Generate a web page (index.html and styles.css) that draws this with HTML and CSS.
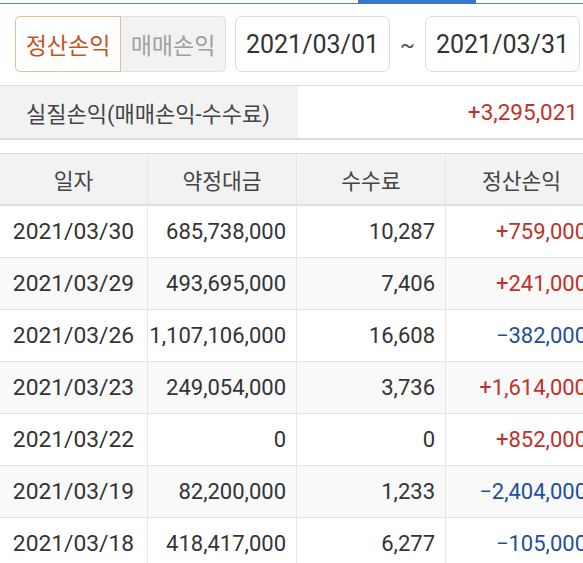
FILE: index.html
```html
<!DOCTYPE html>
<html lang="ko">
<head>
<meta charset="utf-8">
<link rel="stylesheet" href="styles.css">
</head>
<body>
<div class="topbar"><div class="tab-indicator"></div></div>
<div class="controls">
  <div class="toggle">
    <div class="toggle-btn active">정산손익</div>
    <div class="toggle-btn">매매손익</div>
  </div>
  <div class="date-box">2021/03/01</div>
  <div class="tilde">~</div>
  <div class="date-box">2021/03/31</div>
</div>
<div class="summary">
  <div class="summary-label">실질손익(매매손익-수수료)</div>
  <div class="summary-value plus">+3,295,021</div>
</div>
<div class="table">
  <div class="row head">
    <div class="cell c">일자</div>
    <div class="cell c">약정대금</div>
    <div class="cell c">수수료</div>
    <div class="cell c">정산손익</div>
  </div>
  <div class="row">
    <div class="cell date">2021/03/30</div>
    <div class="cell r">685,738,000</div>
    <div class="cell r">10,287</div>
    <div class="cell r plus">+759,000</div>
  </div>
  <div class="row alt">
    <div class="cell date">2021/03/29</div>
    <div class="cell r">493,695,000</div>
    <div class="cell r">7,406</div>
    <div class="cell r plus">+241,000</div>
  </div>
  <div class="row">
    <div class="cell date">2021/03/26</div>
    <div class="cell r">1,107,106,000</div>
    <div class="cell r">16,608</div>
    <div class="cell r minus">−382,000</div>
  </div>
  <div class="row alt">
    <div class="cell date">2021/03/23</div>
    <div class="cell r">249,054,000</div>
    <div class="cell r">3,736</div>
    <div class="cell r plus">+1,614,000</div>
  </div>
  <div class="row">
    <div class="cell date">2021/03/22</div>
    <div class="cell r">0</div>
    <div class="cell r">0</div>
    <div class="cell r plus">+852,000</div>
  </div>
  <div class="row alt">
    <div class="cell date">2021/03/19</div>
    <div class="cell r">82,200,000</div>
    <div class="cell r">1,233</div>
    <div class="cell r minus">−2,404,000</div>
  </div>
  <div class="row">
    <div class="cell date">2021/03/18</div>
    <div class="cell r">418,417,000</div>
    <div class="cell r">6,277</div>
    <div class="cell r minus">−105,000</div>
  </div>
</div>
</body>
</html>
```

FILE: styles.css
```css
html, body {
  margin: 0;
  padding: 0;
  background: #fff;
  overflow: hidden;
}
body {
  width: 583px;
  font-family: Roboto, "Noto Sans CJK KR", sans-serif;
  color: #333;
}
.topbar {
  height: 4px;
  border-bottom: 1px solid #4a80c8;
  box-sizing: border-box;
  position: relative;
  margin-bottom: 12px;
}
.tab-indicator {
  position: absolute;
  left: 358px;
  top: 0;
  width: 118px;
  height: 4px;
  background: #3d78c9;
}
.controls {
  display: flex;
  align-items: center;
  height: 56px;
  padding-left: 15px;
}
.toggle {
  display: flex;
  height: 56px;
  width: 211px;
  margin-right: 9px;
}
.toggle-btn {
  flex: 1;
  display: flex;
  align-items: center;
  justify-content: center;
  font-size: 23px;
  color: #a0a0a0;
  background: #f2f2f2;
  border: 1px solid #e0e0e0;
  border-left: none;
  border-radius: 0 5px 5px 0;
}
.toggle-btn.active {
  color: #c4541f;
  background: #fff;
  border: 1px solid #e6bb9a;
  border-radius: 5px 0 0 5px;
}
.date-box {
  width: 155px;
  height: 56px;
  box-sizing: border-box;
  border: 1px solid #dcdcdc;
  border-radius: 7px;
  display: flex;
  align-items: center;
  justify-content: center;
  font-size: 25px;
  color: #333;
}
.tilde {
  width: 35px;
  text-align: center;
  font-size: 22px;
  color: #555;
}
.summary {
  margin-top: 13px;
  display: flex;
  height: 55px;
  border-top: 1px solid #dcdcdc;
  border-bottom: 2px solid #dcdcdc;
  box-sizing: border-box;
}
.summary-label {
  width: 298px;
  background: #f2f2f2;
  display: flex;
  align-items: center;
  padding-left: 26px;
  box-sizing: border-box;
  font-size: 22px;
  color: #444;
}
.summary-value {
  flex: 1;
  display: flex;
  align-items: center;
  justify-content: flex-end;
  padding-right: 5px;
  font-size: 22.5px;
}
.plus { color: #c2302b; }
.minus { color: #1f4f9c; }
.table {
  margin-top: 13px;
  width: 598px;
  border-top: 1px solid #dcdcdc;
}
.row {
  display: grid;
  grid-template-columns: 148px 149px 149px 152px;
  height: 52px;
  border-bottom: 1px solid #e2e2e2;
  box-sizing: border-box;
  background: #fff;
}
.row.alt { background: #f9f9f9; }
.row.head {
  background: #f2f2f2;
  border-bottom: 2px solid #dedede;
}
.cell {
  display: flex;
  align-items: center;
  font-size: 22px;
  color: #333;
  border-right: 1px solid #e6e6e6;
  white-space: nowrap;
}
.head .cell {
  font-size: 21.5px;
  color: #444;
}
.cell.c { justify-content: center; }
.cell.date {
  justify-content: center;
  font-size: 22.8px;
}
.cell.r { justify-content: flex-end; padding-right: 10px; }
.cell.plus { color: #c2302b; }
.cell.minus { color: #1f4f9c; }
```
